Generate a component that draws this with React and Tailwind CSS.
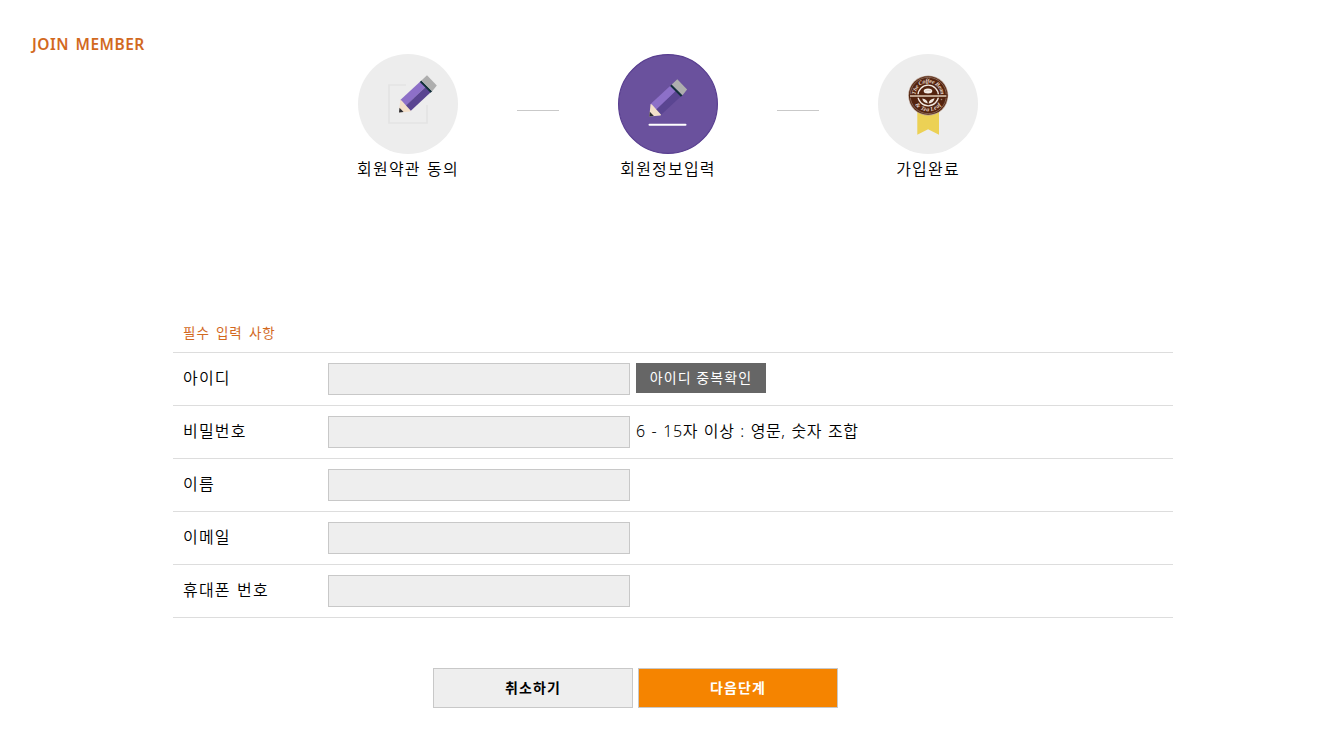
const FONT = "font-['Noto_Sans','Noto_Sans_CJK_KR',sans-serif]";

function Pencil({ x, y }) {
  return (
    <g transform={`translate(${x} ${y})`}>
      <path d="M1.3 -12.4L21.3 -31L26.8 -25.6L6.4 -6Z" fill="#8d70c8" />
      <path d="M6.2 -6.2L26.8 -25.6L32 -20.4L11.6 -1.4Z" fill="#5a4591" />
      <path d="M1.3 -12.4L2.6 -12L6.6 -7.4L11.8 -1.6L11.2 -0.9L0 0Z" fill="#f3dfc9" />
      <path d="M0.5 -4.6L4.6 -0.4L0 0Z" fill="#2b2b30" />
      <path d="M20.8 -30.4L22.4 -31.8L33.2 -21.2L31.6 -19.6Z" fill="#12303a" />
      <path d="M22.4 -31.8L28 -37.2L37.8 -27L33.2 -21.2Z" fill="#aeaeae" />
    </g>
  );
}

function TermsIcon() {
  return (
    <svg width="100" height="100" viewBox="0 0 100 100">
      <circle cx="50" cy="50" r="50" fill="#ededed" />
      <path d="M48 31H31V69H69V51" fill="none" stroke="#e3e3e3" strokeWidth="1.6" />
      <Pencil x={41} y={58.4} />
    </svg>
  );
}

function InfoIcon() {
  return (
    <svg width="100" height="100" viewBox="0 0 100 100">
      <circle cx="50" cy="50" r="49.4" fill="#6a519d" stroke="#593f90" strokeWidth="1.2" />
      <Pencil x={31.3} y={62.4} />
      <path d="M31.5 70.7H67.5" stroke="#fff" strokeWidth="2" strokeLinecap="round" />
    </svg>
  );
}

function DoneIcon() {
  return (
    <svg width="100" height="100" viewBox="0 0 100 100">
      <circle cx="50" cy="50" r="50" fill="#ededed" />
      <path d="M39.3 55H61V80.7L50.1 75.3L39.3 80.7Z" fill="#ecd155" />
      <circle cx="50.2" cy="41.5" r="20" fill="#b9a193" />
      <circle cx="50.2" cy="41.5" r="19.3" fill="#54240f" />
      <circle cx="50.2" cy="41.5" r="18.1" fill="none" stroke="#a58b7c" strokeWidth="0.6" />
      <circle cx="50.2" cy="41.5" r="10.3" fill="none" stroke="#f1e8e0" strokeWidth="1.3" />
      <path d="M31 42H69.4" stroke="#54240f" strokeWidth="3.4" />
      <path d="M32 42H68.4" stroke="#e0cdb9" strokeWidth="1.3" />
      <ellipse cx="50" cy="37" rx="4.3" ry="2.5" fill="#f5eee8" />
      <path d="M46.8 37.3Q50 36 53.2 36.8" fill="none" stroke="#c9b3a6" strokeWidth="0.6" />
      <path d="M49.8 49.4Q45 49 44.2 44.6Q49 45 49.8 49.4Z" fill="#f1e8e0" />
      <path d="M50.6 49.4Q51 45 56.6 44.2Q55.6 49 50.6 49.4Z" fill="#f1e8e0" />
      <circle cx="63.5" cy="45.5" r="0.8" fill="#a58b7c" />
      <path id="badge-top" d="M37.6 41.5A12.6 12.6 0 0 1 62.8 41.5" fill="none" />
      <path id="badge-bottom" d="M34 43.5A16.4 16.4 0 0 0 66.4 43.5" fill="none" />
      <g className="font-['Liberation_Serif',serif] italic font-bold" fontSize="6" fill="#e6d8cc" textAnchor="middle">
        <text>
          <textPath href="#badge-top" startOffset="50%" textLength="38">The Coffee Bean</textPath>
        </text>
        <text>
          <textPath href="#badge-bottom" startOffset="50%" textLength="30">&amp; Tea Leaf</textPath>
        </text>
      </g>
    </svg>
  );
}

function Step({ label, children }) {
  return (
    <div className="flex w-[100px] flex-col items-center">
      {children}
      <span className="mt-[3px] text-[16px] leading-6 font-[350] tracking-[1.2px] whitespace-nowrap [word-spacing:1px]">{label}</span>
    </div>
  );
}

function Connector() {
  return <div className="mx-[59px] mt-14 h-px w-[42px] bg-[#c9c9c9]" />;
}

function Row({ label, type = "text", children }) {
  return (
    <label className="flex h-[53px] items-center border-b border-[#dddddd]">
      <span className="mb-[2px] w-[155px] pl-[10px] text-[16px] leading-6 font-[350] tracking-[1.2px] [word-spacing:1px]">{label}</span>
      <input type={type} className="mr-[6px] h-8 w-[302px] border border-[#c8c8c8] bg-[#eeeeee] px-2 outline-none" />
      {children}
    </label>
  );
}

export default function App() {
  return (
    <main className={`${FONT} h-[751px] w-[1336px] overflow-hidden bg-white text-black`}>
      <header className="h-[54px] pt-8 pl-8">
        <h1 className="text-[15.5px] leading-6 font-semibold tracking-[0.5px] text-[#d2691e] [word-spacing:2px]">JOIN MEMBER</h1>
      </header>

      <section className="flex h-[266px] items-start justify-center">
        <Step label="회원약관 동의"><TermsIcon /></Step>
        <Connector />
        <Step label="회원정보입력"><InfoIcon /></Step>
        <Connector />
        <Step label="가입완료"><DoneIcon /></Step>
      </section>

      <form className="ml-[173px] w-[1000px]">
        <h2 className="h-[33px] border-b border-[#dddddd] pt-[3px] pl-[10px] text-[13.5px] leading-5 font-normal tracking-[1px] text-[#d2691e] [word-spacing:1.6px]">
          필수 입력 사항
        </h2>
        <Row label="아이디">
          <button type="button" className="mb-[2px] h-[30px] w-[130px] bg-[#666666] text-[14px] leading-5 tracking-[1.1px] text-white">
            아이디 중복확인
          </button>
        </Row>
        <Row label="비밀번호" type="password">
          <span className="mb-[2px] text-[16px] leading-6 font-[350] tracking-[0.6px] [word-spacing:1.1px]">6 - 15자 이상 : 영문, 숫자 조합</span>
        </Row>
        <Row label="이름" />
        <Row label="이메일" />
        <Row label="휴대폰 번호" />

        <div className="mt-[50px] ml-[260px] flex gap-[5px]">
          <button type="button" className="h-10 w-[200px] border border-[#c8c8c8] bg-[#eeeeee] pb-[2px] text-[14px] font-bold tracking-[1.1px]">
            취소하기
          </button>
          <button type="button" className="h-10 w-[200px] border border-[#c8c8c8] bg-[#f58400] pb-[2px] text-[14px] font-bold tracking-[1.1px] text-white">
            다음단계
          </button>
        </div>
      </form>
    </main>
  );
}
